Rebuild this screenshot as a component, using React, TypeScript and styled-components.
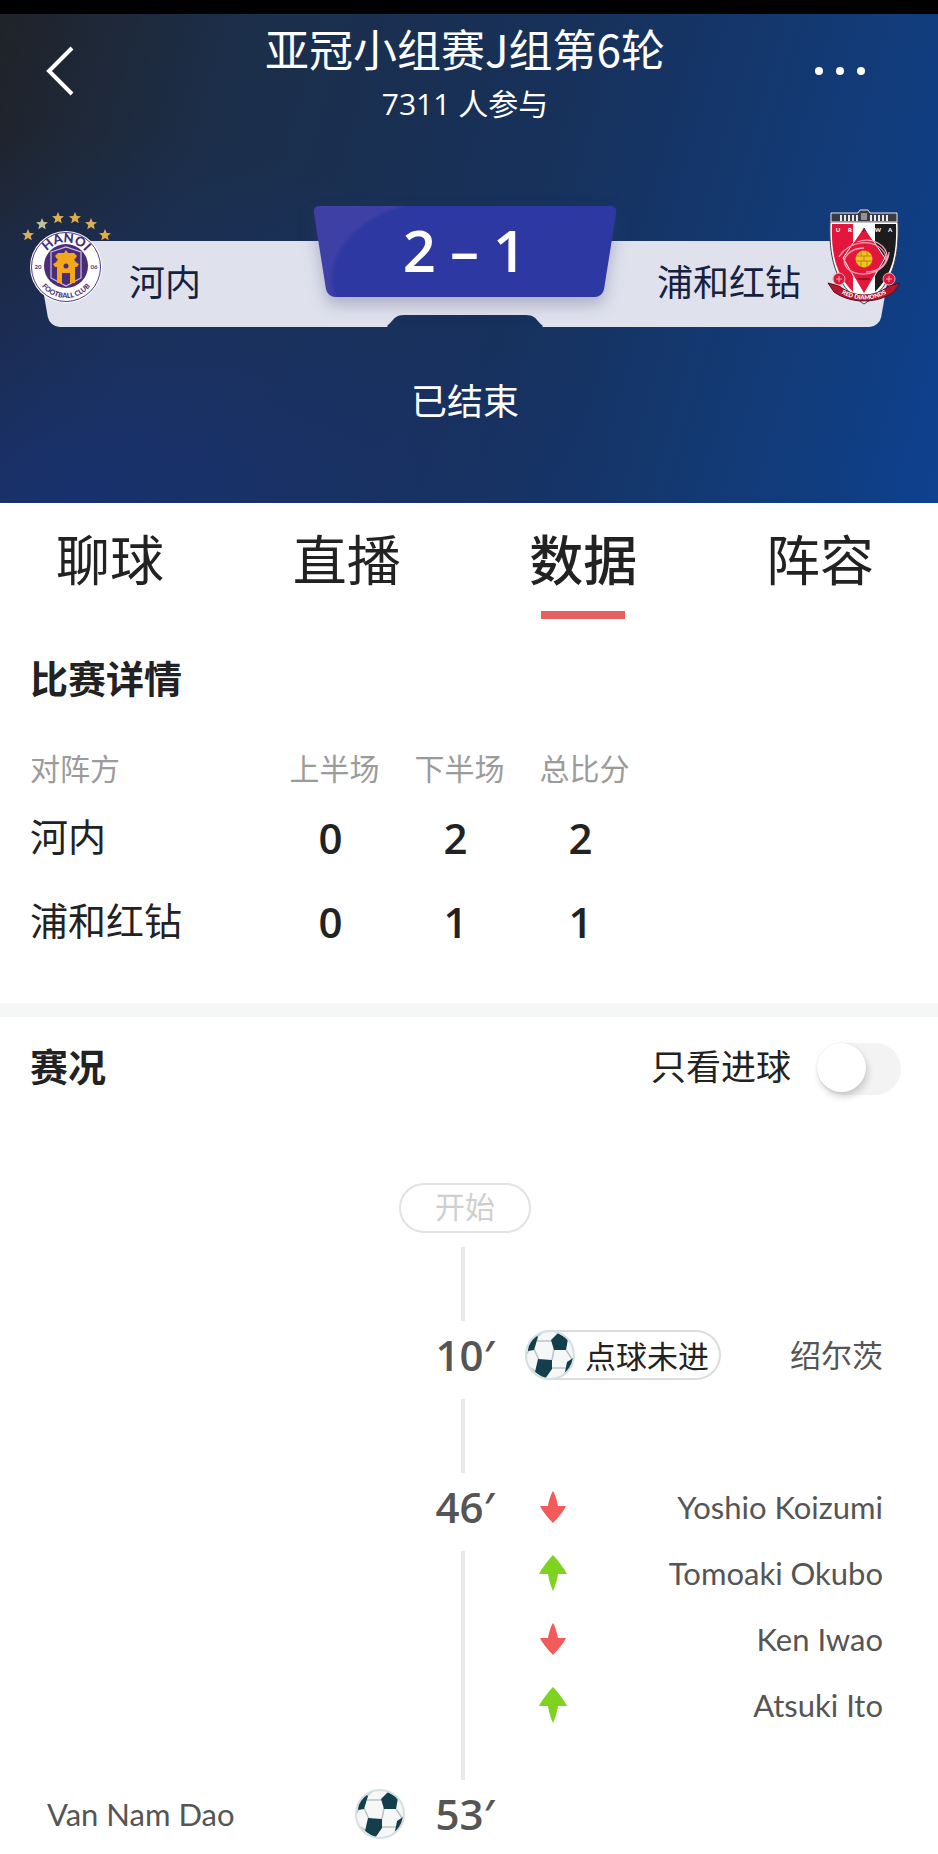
import React, { useState } from "react";
import styled, { createGlobalStyle } from "styled-components";

const cjk = '"Noto Sans CJK SC", sans-serif';
const latin = 'Lato, "Noto Sans CJK SC", sans-serif';
const digits = '"Open Sans", "Noto Sans CJK SC", sans-serif';

const GlobalStyle = createGlobalStyle`
  *, *::before, *::after { box-sizing: border-box; }
  body { margin: 0; background: #fff; color: #222; font-family: ${cjk}; }
  h1, h2, p, ul, ol { margin: 0; padding: 0; list-style: none; }
  button { border: 0; background: none; padding: 0; font: inherit; color: inherit; cursor: pointer; }
`;

const StatusStrip = styled.div`
  height: 14px;
  background: #000;
`;

const Hero = styled.header`
  padding: 2px 8px 80px 0;
  color: #fff;
  background:
    radial-gradient(ellipse 60% 75% at 8% 100%, rgba(24, 50, 115, 0.9), rgba(24, 50, 115, 0) 100%),
    linear-gradient(106deg, #202329 0%, #1c2e49 22%, #17315b 55%, #123b78 82%, #0e418f 100%);
`;

const TopBar = styled.div`
  display: grid;
  grid-template-columns: 1fr auto 1fr;
  align-items: center;
`;

const Title = styled.h1`
  font-size: 44px;
  line-height: 64px;
  font-weight: 400;
  text-align: center;
`;

const Participants = styled.p`
  margin-top: 2px;
  font-family: ${digits};
  font-size: 30px;
  line-height: 44px;
  text-align: center;
`;

const IconButton = styled.button<{ $end?: boolean }>`
  display: flex;
  justify-self: ${(p) => (p.$end ? "end" : "start")};
  margin: ${(p) => (p.$end ? "0 58px 0 0" : "0 0 0 40px")};
`;

const Board = styled.div`
  position: relative;
  margin: 80px 43px 0 42px;
  padding-top: 35px;
`;

const Plate = styled.div`
  display: flex;
  height: 86px;
  color: #14213f;
`;

const Wing = styled.div<{ $away?: boolean }>`
  position: relative;
  flex: 1;
  display: flex;
  align-items: center;
  justify-content: ${(p) => (p.$away ? "flex-end" : "flex-start")};
  padding: ${(p) => (p.$away ? "0 86px 8px 0" : "0 0 8px 87px")};

  &::before {
    content: "";
    position: absolute;
    inset: 0;
    background: #dfe2ed;
    border-radius: ${(p) => (p.$away ? "0 24px 10px 0" : "24px 0 0 10px")};
    transform: skewX(${(p) => (p.$away ? "-10deg" : "10deg")});
  }
`;

const TeamName = styled.span`
  position: relative;
  font-size: 36px;
  line-height: 52px;
`;

const PlateMiddle = styled.div`
  position: relative;
  width: 122px;
  height: 74px;
  background: #dfe2ed;
`;

const PlateCurve = styled.svg`
  position: relative;
  display: block;
`;

const Emblem = styled.svg<{ $away?: boolean }>`
  position: absolute;
  top: 2px;
  ${(p) => (p.$away ? "right: -14px;" : "left: -22px;")}
`;

const Score = styled.div`
  position: absolute;
  top: 0;
  left: 50%;
  width: 290px;
  height: 91px;
  margin-left: -145px;
  display: flex;
  align-items: center;
  justify-content: center;
  gap: 14px;
  font-family: ${digits};
  font-size: 58px;
  line-height: 80px;
  font-weight: 600;
  filter: drop-shadow(0 8px 8px rgba(60, 60, 110, 0.3));

  &::before,
  &::after {
    content: "";
    position: absolute;
    top: 0;
    bottom: 0;
    width: 60%;
    background: #2d38a2;
  }
  &::before {
    left: 0;
    border-radius: 6px 0 0 8px;
    transform: skewX(9deg);
    background: radial-gradient(ellipse 90% 110% at 85% 90%, #2d38a2 88%, #3f40a6 92%);
  }
  &::after {
    right: 0;
    border-radius: 0 6px 8px 0;
    transform: skewX(-9deg);
  }
`;

const ScorePart = styled.span`
  position: relative;
  z-index: 1;
  padding-bottom: 4px;
`;

const MatchState = styled.p`
  margin-top: 48px;
  font-size: 36px;
  line-height: 48px;
  text-align: center;
`;

const Tabs = styled.nav`
  display: flex;
  justify-content: space-between;
  padding: 18px 64px 0 56px;
`;

const Tab = styled.button<{ $active?: boolean }>`
  display: flex;
  flex-direction: column;
  align-items: center;
  gap: 16px;
  font-size: 54px;
  line-height: 74px;
  font-weight: ${(p) => (p.$active ? 500 : 400)};

  &::after {
    content: "";
    width: 84px;
    height: 8px;
    background: ${(p) => (p.$active ? "#e6605f" : "transparent")};
  }
`;

const Details = styled.section`
  padding: 34px 30px 39px;
  border-bottom: 14px solid #f5f7f7;
`;

const SectionTitle = styled.h2`
  font-size: 38px;
  line-height: 48px;
  font-weight: 700;
`;

const ScoreTable = styled.table`
  margin-top: 38px;
  border-collapse: collapse;
  table-layout: fixed;
  width: 615px;
`;

const HeadCell = styled.th<{ $team?: boolean }>`
  width: ${(p) => (p.$team ? "240px" : "125px")};
  height: 57px;
  padding: ${(p) => (p.$team ? "0 0 2px" : "0 0 2px 4px")};
  font-size: 30px;
  line-height: 44px;
  font-weight: 400;
  color: #9b9b9b;
  text-align: ${(p) => (p.$team ? "left" : "center")};
`;

const TeamCell = styled.th`
  height: 84px;
  padding: 0 0 6px;
  font-size: 38px;
  line-height: 52px;
  font-weight: 400;
  text-align: left;
`;

const NumberCell = styled.td`
  padding: 0 4px 0 0;
  font-family: ${digits};
  font-size: 42px;
  line-height: 52px;
  font-weight: 600;
  text-align: center;
`;

const FeedHeader = styled.div`
  display: flex;
  align-items: center;
  justify-content: space-between;
  height: 100px;
  padding: 0 37px 4px 30px;
`;

const FilterLabel = styled.label`
  display: flex;
  align-items: center;
  gap: 26px;
  font-size: 35px;
  line-height: 48px;
  cursor: pointer;
`;

const Switch = styled.input`
  appearance: none;
  width: 84px;
  height: 52px;
  margin: 8px 0 0;
  border-radius: 26px;
  background: #f3f3f3;
  cursor: pointer;

  &::before {
    content: "";
    display: block;
    width: 49px;
    height: 49px;
    border-radius: 50%;
    background: #fff;
    box-shadow: 2px 5px 7px rgba(0, 0, 0, 0.16), 0 0 2px rgba(0, 0, 0, 0.1);
    transition: transform 0.2s;
  }
  &:checked { background: #e6605f; }
  &:checked::before { transform: translateX(35px); }
`;

const Timeline = styled.div`
  display: flex;
  flex-direction: column;
  align-items: center;
  padding: 66px 55px 5px 47px;
`;

const StartPill = styled.span`
  width: 132px;
  height: 50px;
  margin-bottom: 14px;
  border: 2px solid #e2e2e2;
  border-radius: 25px;
  font-size: 30px;
  line-height: 40px;
  text-align: center;
  color: #cfcfcf;
`;

const Line = styled.span`
  flex: 1;
  width: 4px;
  min-height: 74px;
  margin-right: 4px;
  background: #e9e9e9;
`;

const Moments = styled.ol`
  width: 100%;
`;

const Moment = styled.li`
  display: grid;
  grid-template-columns: 1fr 120px 1fr;
`;

const Clock = styled.div`
  display: flex;
  flex-direction: column;
  align-items: center;
`;

const Minute = styled.time<{ $last?: boolean }>`
  margin-bottom: ${(p) => (p.$last ? 0 : 10)}px;
  font-family: ${digits};
  font-size: 42px;
  line-height: 68px;
  font-weight: 600;
  color: #555;
`;

const Events = styled.ul<{ $last?: boolean }>`
  padding: ${(p) => (p.$last ? "1px 0 0" : "1px 0 42px")};
`;

const EventRow = styled.li`
  display: flex;
  align-items: center;
  justify-content: space-between;
  height: 66px;
`;

const Player = styled.span`
  font-family: ${latin};
  font-size: 31px;
  line-height: 44px;
  color: #555;
`;

const ArrowBox = styled.span`
  display: flex;
  padding-left: 14px;
`;

const Chip = styled.span`
  display: flex;
  align-items: center;
  gap: 10px;
  height: 50px;
  padding-right: 12px;
  border-radius: 25px;
  box-shadow: inset 0 0 0 2px #dcdcdc;
  font-size: 31px;
  line-height: 46px;
`;

function Ball() {
  return (
    <svg width="50" height="50" viewBox="0 0 50 50" aria-hidden="true">
      <defs>
        <clipPath id="ball-edge">
          <circle cx="25" cy="25" r="23" />
        </clipPath>
      </defs>
      <circle cx="25" cy="25" r="24" fill="#f6f8f8" stroke="#d5e0e3" strokeWidth="2" />
      <g clipPath="url(#ball-edge)">
        <g fill="none" stroke="#bcc2c4" strokeWidth="1.5">
          <path d="M12 11H27M9 19L14 30M29 19L27 30M41 20L47 29M27 38H41M10 41L2 36M41 41L36 49M33 3L28 0M12 7L18 2M4 20L1 25" />
        </g>
        <g fill="#123f4b">
          <path d="M33 3L43 9L41 20L29 20L26 10Z" />
          <path d="M13 29L27 30L27 39L20 49L10 42Z" />
          <path d="M3 21L4 11L9 4L13 7L9 20Z" />
          <path d="M48 28L42 32L40 42L46 41L50 32Z" />
        </g>
      </g>
    </svg>
  );
}

function Arrow({ up }: { up?: boolean }) {
  return (
    <ArrowBox>
      {up ? (
        <svg width="28" height="36" viewBox="0 0 28 36" role="img" aria-label="换上">
          <path d="M14 0C18 4 25 13 28 19L19 19C18 25 16 32 14 36C12 32 10 25 9 19L0 19C3 13 10 4 14 0Z" fill="#7ed321" />
        </svg>
      ) : (
        <svg width="28" height="36" viewBox="0 0 28 36" role="img" aria-label="换下">
          <path d="M14 34C10 30 4 23 1 17L9 17C10 11 12 5 14 2C16 5 18 11 19 17L27 17C24 23 18 30 14 34Z" fill="#f35b5b" />
        </svg>
      )}
    </ArrowBox>
  );
}

const stars: [number, number, string][] = [
  [8, 27, "#d9ad5a"],
  [22, 16, "#c3c19c"],
  [38, 10, "#dfb052"],
  [55, 10, "#e0ae45"],
  [71, 16, "#d9ad5a"],
  [85, 27, "#e5ae3a"],
];

function HanoiEmblem() {
  return (
    <Emblem width="92" height="100" viewBox="0 0 92 100" role="img" aria-label="Hanoi FC">
      {stars.map(([x, y, fill]) => (
        <path
          key={x}
          transform={`translate(${x} ${y})`}
          d="M0-6L1.700-2L6-1.800L2.700 1L3.800 5.200L0 3L-3.800 5.200L-2.700 1L-6-1.800L-1.700-2Z"
          fill={fill}
        />
      ))}
      <circle cx="46" cy="59" r="36" fill="#fff" />
      <circle cx="46" cy="59" r="34.500" fill="none" stroke="#4b3a86" strokeWidth="1" />
      <circle cx="46" cy="58" r="22" fill="#4a2c78" />
      <path d="M31 44L46 39L61 44V70L46 78L31 70Z" fill="#4a2c78" stroke="#cdbfd8" strokeWidth="1.200" />
      <g fill="#f3a81c">
        <path d="M35 48L38 45H44L46 42L48 45H54L57 48L55 51H37Z" />
        <path d="M33 56C36 55 37 53 38 51H54C55 53 56 55 59 56L57 59H55V75H50V65H42V75H37V59H35Z" />
      </g>
      <circle cx="46" cy="58" r="2.500" fill="#4a2c78" />
      <path id="hanoi-top" d="M21.500 59A24.500 24.500 0 0 1 70.500 59" fill="none" />
      <path id="hanoi-bottom" d="M15 59A31 31 0 0 0 77 59" fill="none" />
      <text fill="#43307c" fontFamily="Lato, sans-serif" fontSize="13" fontWeight="900" textAnchor="middle">
        <textPath href="#hanoi-top" startOffset="50%">HANOI</textPath>
      </text>
      <text fill="#43307c" fontFamily="Lato, sans-serif" fontSize="7" fontWeight="900" textAnchor="middle">
        <textPath href="#hanoi-bottom" startOffset="50%">FOOTBALL CLUB</textPath>
      </text>
      <g fill="#43307c" fontFamily="Lato, sans-serif" fontSize="6" fontWeight="700" textAnchor="middle">
        <text x="18" y="61">20</text>
        <text x="74" y="61">06</text>
      </g>
    </Emblem>
  );
}

function UrawaEmblem() {
  return (
    <Emblem $away width="74" height="100" viewBox="0 0 74 100" role="img" aria-label="Urawa Reds">
      <defs>
        <clipPath id="shield">
          <path d="M5 16H69C70 45 66 74 37 92C8 74 4 45 5 16Z" />
        </clipPath>
      </defs>
      <path d="M3 14H71C72 46 68 77 37 96C6 77 2 46 3 14Z" fill="#fff" stroke="#3c3c44" strokeWidth="1" />
      <g clipPath="url(#shield)">
        <path d="M4 15H26V96H4Z" fill="#e3173c" />
        <path d="M48 15H70V96H48Z" fill="#1d1b1c" />
        <path d="M37 19L58 50L37 86L16 50Z" fill="#e3173c" stroke="#fff" strokeWidth="1" />
        <path d="M12 49C22 32 48 30 57 44C64 56 50 64 39 64M62 44C61 66 32 72 20 60C12 50 24 40 37 40M30 34C46 28 62 38 60 52" fill="none" stroke="#f3a2b3" strokeWidth="1.300" />
        <circle cx="37" cy="51" r="8.500" fill="#f5c41c" />
        <path d="M29 48H45M29 53H45M34 43V48M40 43V48M37 48V53M34 53V59M40 53V59" stroke="#b88214" strokeWidth="1" />
        <path d="M31 71H43" stroke="#8d0d25" strokeWidth="1.500" />
      </g>
      <path d="M4 5H31L33 2H41L43 5H70V14H4Z" fill="#3a3b42" stroke="#e9e9ee" strokeWidth="1" />
      <path d="M14 7V13M18 7V13M22 7V13M26 7V13M30 7V13M44 7V13M48 7V13M52 7V13M56 7V13M60 7V13" stroke="#e9e9ee" strokeWidth="2" />
      <path d="M34 5H40V12H34Z" fill="#8e9198" />
      <path d="M1 75L12 78C28 90 46 90 62 78L73 75L67 84C50 96 24 96 7 84Z" fill="#b5152f" stroke="#5b0d1b" strokeWidth="1" />
      <circle cx="12" cy="71" r="6" fill="#d8193a" stroke="#f0a3b0" strokeWidth="1" />
      <circle cx="62" cy="71" r="6" fill="#d8193a" stroke="#f0a3b0" strokeWidth="1" />
      <path d="M9 71H15M12 68V74M59 71H65M62 68V74" stroke="#f0a3b0" strokeWidth="1" />
      <path id="urawa-ribbon" d="M12 84C28 94 46 94 62 84" fill="none" />
      <text fill="#fff" fontFamily="Lato, sans-serif" fontSize="6" fontWeight="900" textAnchor="middle">
        <textPath href="#urawa-ribbon" startOffset="50%">RED DIAMONDS</textPath>
      </text>
      <g fontFamily="Lato, sans-serif" fontSize="6" fontWeight="900" textAnchor="middle" fill="#fff">
        <text x="11" y="24">U</text>
        <text x="23" y="24">R</text>
        <text x="37" y="24" fill="#333">A</text>
        <text x="51" y="24">W</text>
        <text x="63" y="24">A</text>
      </g>
    </Emblem>
  );
}

const tabs = ["聊球", "直播", "数据", "阵容"];

const results = [
  { team: "河内", scores: [0, 2, 2] },
  { team: "浦和红钻", scores: [0, 1, 1] },
];

const substitutions = [
  { name: "Yoshio Koizumi", up: false },
  { name: "Tomoaki Okubo", up: true },
  { name: "Ken Iwao", up: false },
  { name: "Atsuki Ito", up: true },
];

export default function App() {
  const [active, setActive] = useState("数据");
  const [goalsOnly, setGoalsOnly] = useState(false);

  return (
    <>
      <GlobalStyle />
      <StatusStrip />
      <Hero>
        <TopBar>
          <IconButton aria-label="返回">
            <svg width="40" height="56" viewBox="0 0 40 56" fill="none" stroke="#fff" strokeWidth="4">
              <path d="M32 5L9 28L32 51" />
            </svg>
          </IconButton>
          <div>
            <Title>亚冠小组赛J组第6轮</Title>
            <Participants>7311 人参与</Participants>
          </div>
          <IconButton $end aria-label="更多">
            <svg width="64" height="40" viewBox="0 0 64 40" fill="#fff">
              <circle cx="11" cy="20" r="4" />
              <circle cx="32" cy="20" r="4" />
              <circle cx="53" cy="20" r="4" />
            </svg>
          </IconButton>
        </TopBar>
        <Board>
          <Plate>
            <Wing>
              <TeamName>河内</TeamName>
            </Wing>
            <PlateCurve width="24" height="86" viewBox="0 0 24 86" aria-hidden="true">
              <path d="M0 0H24V74C10 74 14 86 0 86Z" fill="#dfe2ed" />
            </PlateCurve>
            <PlateMiddle />
            <PlateCurve width="24" height="86" viewBox="0 0 24 86" aria-hidden="true">
              <path d="M24 0H0V74C14 74 10 86 24 86Z" fill="#dfe2ed" />
            </PlateCurve>
            <Wing $away>
              <TeamName>浦和红钻</TeamName>
            </Wing>
          </Plate>
          <Score>
            <ScorePart>2</ScorePart>
            <ScorePart>–</ScorePart>
            <ScorePart>1</ScorePart>
          </Score>
          <HanoiEmblem />
          <UrawaEmblem />
        </Board>
        <MatchState>已结束</MatchState>
      </Hero>

      <Tabs>
        {tabs.map((tab) => (
          <Tab key={tab} $active={tab === active} onClick={() => setActive(tab)}>
            {tab}
          </Tab>
        ))}
      </Tabs>

      <Details>
        <SectionTitle>比赛详情</SectionTitle>
        <ScoreTable>
          <thead>
            <tr>
              <HeadCell $team scope="col">对阵方</HeadCell>
              <HeadCell scope="col">上半场</HeadCell>
              <HeadCell scope="col">下半场</HeadCell>
              <HeadCell scope="col">总比分</HeadCell>
            </tr>
          </thead>
          <tbody>
            {results.map((row) => (
              <tr key={row.team}>
                <TeamCell scope="row">{row.team}</TeamCell>
                {row.scores.map((score, i) => (
                  <NumberCell key={i}>{score}</NumberCell>
                ))}
              </tr>
            ))}
          </tbody>
        </ScoreTable>
      </Details>

      <section>
        <FeedHeader>
          <SectionTitle>赛况</SectionTitle>
          <FilterLabel>
            只看进球
            <Switch
              type="checkbox"
              role="switch"
              checked={goalsOnly}
              onChange={(e) => setGoalsOnly(e.target.checked)}
            />
          </FilterLabel>
        </FeedHeader>
        <Timeline>
          <StartPill>开始</StartPill>
          <Line />
          <Moments>
            <Moment>
              <span />
              <Clock>
                <Minute>10′</Minute>
                <Line />
              </Clock>
              <Events>
                <EventRow>
                  <Chip>
                    <Ball />
                    点球未进
                  </Chip>
                  <Player>绍尔茨</Player>
                </EventRow>
              </Events>
            </Moment>
            <Moment>
              <span />
              <Clock>
                <Minute>46′</Minute>
                <Line />
              </Clock>
              <Events>
                {substitutions.map((sub) => (
                  <EventRow key={sub.name}>
                    <Arrow up={sub.up} />
                    <Player>{sub.name}</Player>
                  </EventRow>
                ))}
              </Events>
            </Moment>
            <Moment>
              <Events $last>
                <EventRow>
                  <Player>Van Nam Dao</Player>
                  <Ball />
                </EventRow>
              </Events>
              <Clock>
                <Minute $last>53′</Minute>
              </Clock>
            </Moment>
          </Moments>
        </Timeline>
      </section>
    </>
  );
}
